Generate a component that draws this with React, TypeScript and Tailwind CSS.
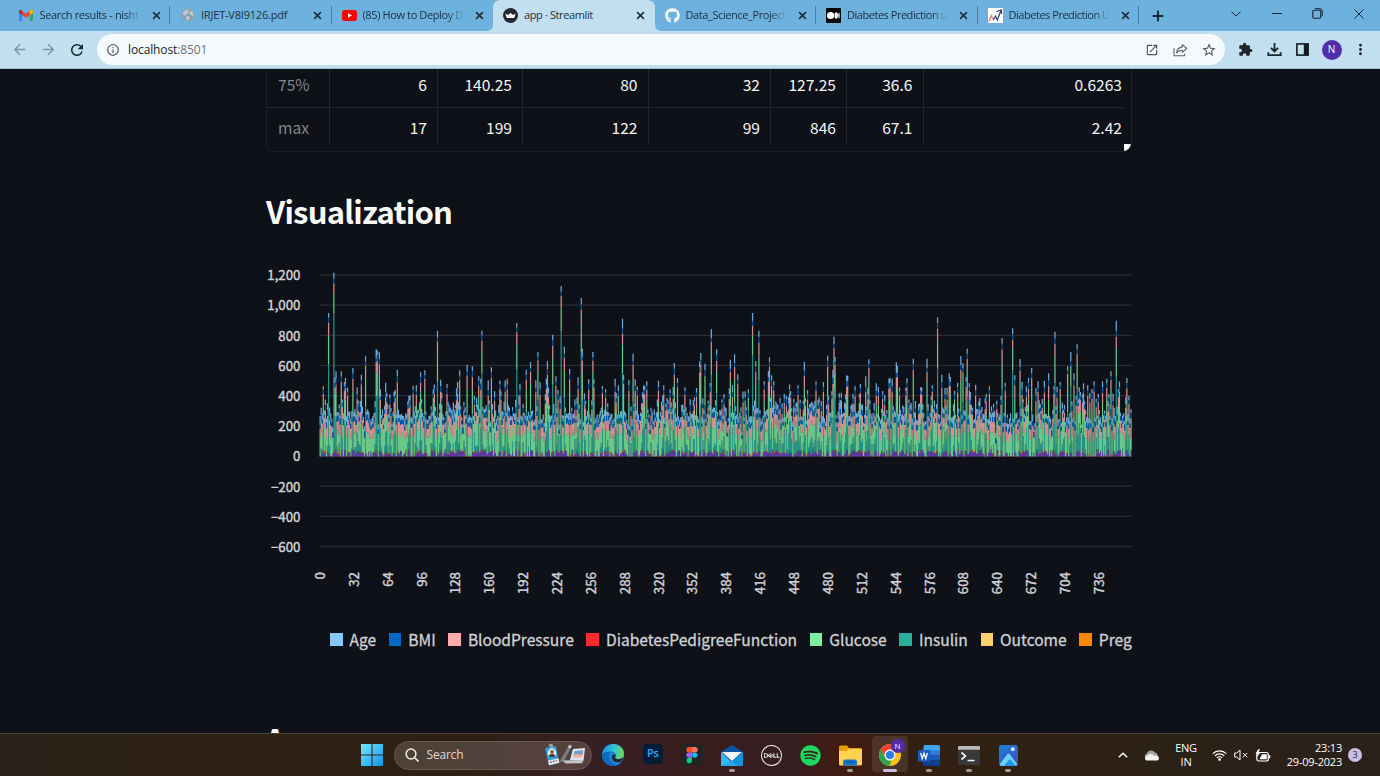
import type { ReactNode } from "react";
import { FaGithub, FaSpotify } from "react-icons/fa";
import { SiDell } from "react-icons/si";
import {
  MdArrowBack,
  MdArrowForward,
  MdExtension,
  MdMoreVert,
  MdOpenInNew,
  MdOutlineInfo,
  MdRefresh,
  MdStarBorder,
} from "react-icons/md";

/* ---------- Tab icons ---------- */

const GmailIcon = () => (
  <svg viewBox="0 0 14 11" className="h-[11px] w-[14px]">
    <path d="M0 1.5V10a1 1 0 0 0 1 1h2.2V4.6z" fill="#4285f4" />
    <path d="M14 1.5V10a1 1 0 0 1-1 1h-2.2V4.6z" fill="#34a853" />
    <path d="M0 1.6C0 .2 1.5-.4 2.6.4L7 3.8 11.4.4C12.5-.4 14 .2 14 1.6L10.8 4.9 7 7.8 3.2 4.9z" fill="#ea4335" />
    <path d="M0 1.6C0 .5 1-.2 2 .1l1.2.8v4L0 2.8z" fill="#c5221f" />
    <path d="M14 1.6C14 .5 13-.2 12 .1l-1.2.8v4L14 2.8z" fill="#fbbc04" />
  </svg>
);

const GlobeIcon = () => (
  <svg viewBox="0 0 14 14" className="size-[14px]">
    <circle cx="7" cy="7" r="6.5" fill="#8f9fa9" />
    <path d="M1.800 5C2.600 3 4.600 1.800 6.500 1.700L8 3 6.500 4.500 7 6 5 6.300 4 7.800 2.500 7zM8.500 3.500l2.500-.3 1.500 2.300-.3 3-1.700-.5L9.500 6 8 5.500zM4.800 8.500l2.700-.3 1.500 1.500-1.500 2.500-2 .1z" fill="#bccbd5" />
  </svg>
);

const YoutubeIcon = () => (
  <svg viewBox="0 0 15 11" className="h-[11px] w-[15px]">
    <rect width="15" height="11" rx="2.8" fill="#f00" />
    <path d="M6 3.200v4.600l4-2.300z" fill="#fff" />
  </svg>
);

const StreamlitIcon = () => (
  <svg viewBox="0 0 15 15" className="size-[15px]">
    <circle cx="7.500" cy="7.500" r="7.500" fill="#262730" />
    <path d="M2.300 5.600l2.700 1.300L7.500 4.900 10 6.900l2.700-1.300-1.300 4c-.1.400-.3.500-.7.500H4.300c-.4 0-.6-.1-.7-.5z" fill="#fff" />
  </svg>
);

const MediumIcon = () => (
  <svg viewBox="0 0 15 15" className="size-[15px]">
    <rect width="15" height="15" rx="1" fill="#000" />
    <circle cx="4.600" cy="7.500" r="3.600" fill="#fff" />
    <ellipse cx="10.200" cy="7.500" rx="1.700" ry="3.300" fill="#fff" />
    <ellipse cx="13" cy="7.500" rx=".7" ry="3" fill="#fff" />
  </svg>
);

const TrendIcon = () => (
  <svg viewBox="0 0 15 15" className="size-[15px]">
    <rect width="15" height="15" fill="#fff" />
    <path d="M.8 13.500L3.400 7.500l2.200 4.500" fill="none" stroke="#ef7b5c" strokeWidth="1.300" />
    <path d="M5.400 12L7.500 8l1.800 4L13 2.500M8.500 3.700L13.200 1.800l.6 4" fill="none" stroke="#1f3f78" strokeWidth="1.200" />
  </svg>
);

const CloseIcon = () => (
  <svg viewBox="0 0 9 9" className="size-[9px] shrink-0">
    <path d="M1.100 1.100l6.800 6.800M7.900 1.100L1.100 7.900" stroke="#202b33" strokeWidth="1.500" />
  </svg>
);

type Tab = { icon: ReactNode; title: string; active?: boolean; divider?: boolean; tracking: string };

const FADE = "[mask-image:linear-gradient(to_right,#000_84%,transparent_100%)]";

const tabs: Tab[] = [
  { icon: <GmailIcon />, title: "Search results - nisht", divider: true, tracking: `tracking-[-0.36px] ${FADE}` },
  { icon: <GlobeIcon />, title: "IRJET-V8I9126.pdf", divider: true, tracking: "tracking-[-0.2px]" },
  { icon: <YoutubeIcon />, title: "(85) How to Deploy D", tracking: `tracking-[-0.38px] ${FADE}` },
  { icon: <StreamlitIcon />, title: "app · Streamlit", active: true, tracking: "tracking-[-0.38px]" },
  { icon: <FaGithub className="size-[15px] text-white" />, title: "Data_Science_Project", divider: true, tracking: `tracking-[-0.4px] ${FADE}` },
  { icon: <MediumIcon />, title: "Diabetes Prediction u", divider: true, tracking: `tracking-[-0.47px] ${FADE}` },
  { icon: <TrendIcon />, title: "Diabetes Prediction U", divider: true, tracking: `tracking-[-0.47px] ${FADE}` },
];

function TabStrip() {
  return (
    <div className="flex h-[31px] shrink-0 bg-[#6db1de] pl-[8.500px] text-[#20323f]">
      {tabs.map((t) => (
        <div key={t.title} className="relative flex w-[161.500px] shrink-0 items-center pb-px pl-[9.500px] pr-[10px]">
          {t.active && (
            <svg viewBox="0 0 174 31" className="absolute -left-[6px] top-0 h-[31px] w-[174px]">
              <path d="M0 31q6 0 6-7V8q0-8 8-8h146q8 0 8 8v16q0 7 6 7z" fill="#c2dff0" />
            </svg>
          )}
          <span className="relative flex w-[16px] shrink-0 items-center justify-center">{t.icon}</span>
          <span className={`relative ml-[5.500px] min-w-[101px] whitespace-nowrap text-[11px] leading-[16px] ${t.tracking}`}>
            {t.title}
          </span>
          <span className="absolute right-[9.500px] top-[11px] flex">
            <CloseIcon />
          </span>
          {t.divider && <span className="absolute right-0 top-[6px] h-[18px] w-px bg-[#4b7b9c]" />}
        </div>
      ))}
      <div className="ml-[11px] flex w-[16px] items-center justify-center">
        <svg viewBox="0 0 12 12" className="size-[12px]">
          <path d="M6 .8v10.400M.8 6h10.400" stroke="#17242d" strokeWidth="1.900" />
        </svg>
      </div>
      <div className="ml-auto flex h-[27px] items-center text-[#16252f]">
        <span className="flex w-[41px] justify-center">
          <svg viewBox="0 0 10 6" className="h-[6px] w-[10px]">
            <path d="M.5.700L5 5.100 9.500.700" fill="none" stroke="currentColor" strokeWidth="1" />
          </svg>
        </span>
        <span className="flex w-[41px] justify-center">
          <span className="h-px w-[10px] bg-[#16252f]" />
        </span>
        <span className="flex w-[41px] justify-center">
          <svg viewBox="0 0 11 11" className="size-[11px]">
            <rect x=".8" y="2.300" width="7.900" height="7.900" rx="1.200" fill="none" stroke="currentColor" strokeWidth="1.100" />
            <path d="M2.800.7h5.200a2.300 2.300 0 0 1 2.300 2.300v5.200" fill="none" stroke="currentColor" strokeWidth="1" />
          </svg>
        </span>
        <span className="flex w-[42px] justify-center">
          <svg viewBox="0 0 10 10" className="size-[10px]">
            <path d="M.5.500l9 9M9.500.500l-9 9" stroke="currentColor" strokeWidth="1" />
          </svg>
        </span>
      </div>
    </div>
  );
}

function Toolbar() {
  return (
    <div className="flex h-[38px] shrink-0 items-center border-b border-[#9fbfcd] bg-[#c2dff0]">
      <MdArrowBack className="ml-[11px] size-[17px] text-[#7b93a3]" />
      <MdArrowForward className="ml-[12px] size-[17px] text-[#7b93a3]" />
      <MdRefresh className="ml-[11px] size-[18px] text-[#1b262d]" />
      <div className="ml-[11px] flex h-[31px] w-[1128px] items-center rounded-full bg-[#f5fafe] pl-[9px] text-[#4d565c]">
        <MdOutlineInfo className="size-[14px]" />
        <span className="ml-[8px] text-[12px] leading-[16px] tracking-[-0.12px] text-[#1d2226]">
          localhost<span className="text-[#6b7277]">:8501</span>
        </span>
        <span className="ml-auto flex items-center pr-[8px]">
          <MdOpenInNew className="size-[14px]" />
          <svg viewBox="0 0 15 14" className="ml-[14px] h-[14px] w-[15px]">
            <path d="M1 5v7.800h10.500v-2" fill="none" stroke="#5d666c" strokeWidth="1.100" />
            <path d="M9.300 1.700l4.500 3.800-4.500 3.800V7.200C6.800 7.100 5 7.900 3.500 10c.4-3.100 2.200-5.500 5.800-6.100z" fill="none" stroke="#5d666c" strokeWidth="1.100" strokeLinejoin="round" />
          </svg>
          <MdStarBorder className="ml-[13px] size-[16px]" />
        </span>
      </div>
      <MdExtension className="ml-[13px] size-[15px] text-[#1c252b]" />
      <svg viewBox="0 0 15 15" className="ml-[13.500px] size-[15px]">
        <path d="M7.500 1v8M3.900 5.800l3.600 3.600 3.600-3.600M1.300 10.200v3h12.400v-3" fill="none" stroke="#1c252b" strokeWidth="1.800" />
      </svg>
      <svg viewBox="0 0 13 13" className="ml-[14.500px] h-[13px] w-[13px]">
        <rect x=".9" y=".9" width="11.200" height="11.200" fill="none" stroke="#111a20" strokeWidth="1.600" />
        <path d="M7.800 1h4.200v11H7.800z" fill="#111a20" />
      </svg>
      <span className="ml-[12.500px] flex size-[20px] items-center justify-center rounded-full bg-[#512da8] text-[10px] text-white">
        N
      </span>
      <MdMoreVert className="ml-[10px] size-[17px] text-[#1c252b]" />
    </div>
  );
}

/* ---------- Summary table ---------- */

const rows = [
  ["75%", "6", "140.25", "80", "32", "127.25", "36.6", "0.6263"],
  ["max", "17", "199", "122", "99", "846", "67.1", "2.42"],
];

function SummaryTable() {
  return (
    <div className="relative ml-[266px] h-[83px] w-[866px] overflow-hidden rounded-b-[9px] border border-t-0 border-[#1e2126]">
      <div className="flex h-[75px] w-[857px] flex-col justify-start overflow-hidden">
        {rows.map((r, i) => (
          <div
            key={r[0]}
            className={`grid shrink-0 grid-cols-[63px_108px_85px_125.500px_122.500px_76px_76.500px_208.500px] ${
              i === 0 ? "h-[39px]" : "h-[43px]"
            }`}
          >
            {r.map((c, j) => (
              <div
                key={j}
                className={`flex justify-end pr-[10px] text-[15.600px] ${j < 7 ? "border-r border-[#24262b]" : ""} ${
                  j === 0 ? "!justify-start pl-[11px] text-[#83858a]" : "text-[#f4f5f6]"
                } ${i === 0 ? "h-[39px] border-b border-b-[#24262b] leading-[30px]" : "h-[43px] leading-[38px]"}`}
              >
                {c}
              </div>
            ))}
          </div>
        ))}
      </div>
      <span className="absolute bottom-0 right-0 size-[7px] bg-white" />
    </div>
  );
}

/* ---------- Stacked bar chart ---------- */

const BASE = 194.500;
const UNIT = 0.1511;
const LEFT = 319.500;
const STEP = 1.0573;

/* Tall records: horizontal position and top of the stack, in thirds of a pixel. */
const tall: [number, number[][]][] = [
  [260, [[204,153],[220,32],[191,373],[224,347],[229,328],[242,328],[255,347],[277,318],[290,376],[303,338],[316,283],[348,262],[351,265],[357,270],[362,382],[379,392],[411,323],[404,384],[449,400],[468,370],[480,331],[493,325],[518,382],[531,206],[541,353],[560,366],[592,360],[598,325],[620,308],[637,313],[656,343],[661,350],[665,206],[684,355],[694,316],[703,388],[722,388],[735,355],[741,350],[770,183],[779,365],[798,323],[811,301],[827,355],[833,270],[859,350],[862,298],[878,218],[887,343]]],
  [560, [[2,72],[12,254],[28,321],[54,346],[64,108],[67,260],[86,352],[98,270],[103,352],[165,350],[174,370],[187,170],[191,338],[206,353],[218,275],[224,352],[250,370],[254,372],[260,358],[295,356],[312,370],[343,303],[353,348],[375,376],[409,378],[418,298],[421,273],[434,305],[452,363],[455,201],[470,262],[492,397],[511,293],[517,370],[524,277],[533,337],[555,388],[565,382],[577,153],[587,298],[597,206],[612,358],[626,328],[629,286],[636,340],[640,358],[678,402],[692,388],[714,370],[733,300],[768,358],[791,360],[803,281],[819,324],[822,224],[826,285],[845,392],[861,340],[864,342],[886,374]]],
  [850, [[16,373],[31,366],[47,343],[57,292],[85,375],[117,350],[121,347],[125,350],[139,301],[143,312],[148,376],[171,349],[190,290],[211,376],[215,376],[231,290],[248,370],[263,166],[276,338],[286,378],[296,334],[299,345],[323,362],[333,282],[340,304],[349,345],[352,260],[358,363],[378,368],[419,373],[457,228],[464,362],[489,199],[495,340],[511,291],[515,360],[530,373],[536,347],[546,318],[565,358],[584,357],[597,334],[610,373],[616,209],[620,374],[631,360],[654,313],[663,270],[673,334],[680,247],[689,376],[699,364],[714,370],[733,358],[745,396],[758,358],[771,350],[784,328],[800,176],[806,382],[831,348],[837,402]]],
];

const tops = new Map<number, number>();
for (const [origin, points] of tall) {
  for (const [px, py] of points) {
    const i = Math.round((origin + px / 3 - LEFT) / STEP - 0.5);
    tops.set(i, (BASE - py / 3) / UNIT);
  }
}

let seed = 90217;
const rnd = () => {
  seed = (seed * 1664525 + 1013904223) >>> 0;
  return seed / 4294967296;
};

/* Layers from the bottom of the stack to the top. */
const layerColors = ["#6d3fc0", "#ff8700", "#ffd16a", "#29b09d", "#7defa1", "#ffabab", "#0068c9", "#83c9ff"];
const layers = layerColors.map(() => "");

for (let i = 0; i < 768; i++) {
  const peak = tops.get(i);
  const skin = rnd() < 0.28 && !peak ? 0 : 12 + rnd() * 32;
  const preg = rnd() * rnd() * 14;
  const outcome = rnd() < 0.35 ? 1 : 0;
  let age = 21 + rnd() * rnd() * 45;
  const bmi = 21 + rnd() * 20;
  let bp = rnd() < 0.05 ? 0 : 54 + rnd() * 32;
  let glucose = 76 + (rnd() + rnd()) * 46;
  let insulin = skin === 0 || rnd() < 0.38 ? 0 : 30 + rnd() * rnd() * 190;
  if (peak) {
    if (peak > 500) {
      glucose = Math.min(197, glucose + 45);
      age += 8;
      bp += 5;
    }
    const rest = skin + preg + outcome + age + bmi + bp + glucose;
    insulin = peak - rest;
    if (insulin < 0) {
      glucose += insulin;
      insulin = 0;
    }
  }
  const x = (i * STEP).toFixed(2);
  let y = BASE;
  [skin, preg, outcome, insulin, glucose, bp, bmi, age].forEach((v, k) => {
    const h = v * UNIT;
    if (h > 0) {
      layers[k] += `M${x} ${y.toFixed(2)}h1.250v${(-h).toFixed(2)}h-1.250z`;
      y -= h;
    }
  });
}

const yTicks = ["1,200", "1,000", "800", "600", "400", "200", "0", "−200", "−400", "−600"];
const xTicks = Array.from({ length: 24 }, (_, i) => i * 32);

const legend: [string, string][] = [
  ["Age", "bg-[#83c9ff]"],
  ["BMI", "bg-[#0068c9]"],
  ["BloodPressure", "bg-[#ffabab]"],
  ["DiabetesPedigreeFunction", "bg-[#ff2b2b]"],
  ["Glucose", "bg-[#7defa1]"],
  ["Insulin", "bg-[#29b09d]"],
  ["Outcome", "bg-[#ffd16a]"],
  ["Preg", "bg-[#ff8700]"],
];

function BarChart() {
  return (
    <svg viewBox="260 0 880 345" className="ml-[260px] block h-[345px] w-[880px]">
      {yTicks.map((t, i) => (
        <g key={t}>
          <path d={`M320 ${(12.900 + i * 30.180).toFixed(1)}H1132`} stroke="#2a2b34" strokeWidth="1.300" />
          <text
            x="300.500"
            y={18.300 + i * 30.180}
            textAnchor="end"
            fontSize="13.300"
            fill="#d0d1d6"
            stroke="#d0d1d6"
            strokeWidth=".4"
          >
            {t}
          </text>
        </g>
      ))}
      <g transform={`translate(${LEFT} 0)`} opacity="0.820">
        {layers.map((d, i) => (
          <path key={i} d={d} fill={layerColors[i]} />
        ))}
      </g>
      {xTicks.map((t) => (
        <text
          key={t}
          transform={`translate(${(325 + t * 1.0582).toFixed(2)} 310) rotate(-90)`}
          textAnchor="end"
          fontSize="13.300"
          fill="#d0d1d6"
          stroke="#d0d1d6"
          strokeWidth=".4"
        >
          {t}
        </text>
      ))}
    </svg>
  );
}

function Legend() {
  return (
    <div className="ml-[330px] mt-[20px] flex h-[24px] w-[806px] items-center gap-[12.700px] text-[15.550px] leading-[24px] text-[#d0d1d5] [-webkit-text-stroke:0.3px_#d0d1d5]">
      {legend.map(([name, color]) => (
        <span key={name} className="flex shrink-0 items-center gap-[7px]">
          <span className={`mt-px size-[12.500px] ${color}`} />
          {name}
        </span>
      ))}
    </div>
  );
}

/* ---------- Taskbar ---------- */

const WindowsIcon = () => (
  <svg viewBox="0 0 22 22" className="size-[22px]">
    <defs>
      <linearGradient id="win" x1="0" y1="0" x2="1" y2="1">
        <stop offset="0" stopColor="#7be4ff" />
        <stop offset="1" stopColor="#0a96ee" />
      </linearGradient>
    </defs>
    <path d="M0 0h10.500v10.500H0zM11.500 0H22v10.500H11.500zM0 11.500h10.500V22H0zM11.500 11.500H22V22H11.500z" fill="url(#win)" />
  </svg>
);

const SearchArt = () => (
  <svg viewBox="0 0 42 24" className="h-[24px] w-[42px]">
    <path d="M15.500 18.500L25 2.500l2.500 1-8 15.500z" fill="#777f82" />
    <path d="M25 2l2.700.5-1 3-3-1z" fill="#c5cacc" />
    <path d="M1 5l11-2 3 17-10 2.500z" fill="#2e9fd8" />
    <path d="M4.500 1.500l4-1 1 5-3 .5z" fill="#8ca2aa" />
    <circle cx="8" cy="10" r="4.400" fill="#e4eef2" />
    <circle cx="8" cy="8.800" r="1.900" fill="#875637" />
    <path d="M4.800 13c.8-3 5.700-3 6.400 0-1.800 2-4.800 1.800-6.400 0z" fill="#4b3e39" />
    <path d="M4 17.500l10.500-2.300 1 4.500-10.500 2.500z" fill="#e5e5e5" />
    <path d="M6 19.300l7-1.600" stroke="#6c7174" strokeWidth="1.200" strokeDasharray="2 1" />
    <path d="M29 6l12-1-1.500 12.500L26 17z" fill="#d9e7f2" />
    <path d="M30.500 8l8.700-.7-.5 5-9.200.7z" fill="#7099ce" />
    <path d="M29.500 12c3-2 6 .5 9.200-1.500l-.5 4-9.200.2z" fill="#efb59b" />
    <path d="M19 17.500l20.500-.5-1.500 3.200-16.500.3z" fill="#c2c6ca" />
  </svg>
);

const EdgeIcon = () => (
  <svg viewBox="0 0 22 22" className="size-[22px]">
    <defs>
      <linearGradient id="edgeTop" x1="0" y1=".3" x2="1" y2=".4">
        <stop offset="0" stopColor="#168fdc" />
        <stop offset=".55" stopColor="#36c3d8" />
        <stop offset="1" stopColor="#64db4d" />
      </linearGradient>
    </defs>
    <circle cx="11" cy="11" r="11" fill="#1785dc" />
    <path d="M.3 9.500C1.500 3.600 6 0 11.300 0 17.500 0 22 4.300 22 9.400c0 3.600-2.600 5.800-5.700 5.800-2 0-3.500-.8-3.500-1.600 0-.6.900-.9.900-2.300 0-2.400-2.300-4.100-5.200-4.100C5 7.200 1.700 8 .3 9.500z" fill="url(#edgeTop)" />
    <path d="M8.300 8.200C5.800 10.500 6.400 15 9 18c1.600 1.900 4 2.900 6.200 3.100C10 23.300 1 21.300.1 12.500-.2 9 5 7.200 8.300 8.200z" fill="#1166bb" />
    <path d="M12.800 13.600c0 .8 1.500 1.600 3.500 1.600 1.900 0 3.900-.9 4.800-1.600.5 0-.6 2.300-2.300 3.800-4.100 2.500-9.600-.8-8.600-5 .3-1.200 1.500-2.300 2.800-2.100 1 .8.900 2 .3 2.500z" fill="#2d2023" />
  </svg>
);

const FigmaIcon = () => (
  <svg viewBox="0 0 22 22" className="size-[22px]">
    <rect width="22" height="22" rx="2" fill="#242424" />
    <path d="M11 3H8a2.700 2.700 0 0 0 0 5.400h3z" fill="#f24e1e" />
    <path d="M11 3h3a2.700 2.700 0 0 1 0 5.400h-3z" fill="#ff7262" />
    <path d="M11 8.400H8a2.700 2.700 0 0 0 0 5.400h3z" fill="#a259ff" />
    <circle cx="13.800" cy="11.100" r="2.700" fill="#1abcfe" />
    <path d="M11 13.800H8a2.700 2.700 0 1 0 3 2.700z" fill="#0acf83" />
  </svg>
);

const MailIcon = () => (
  <svg viewBox="0 0 22 21" className="h-[21px] w-[22px]">
    <path d="M11 0l11 7v13a1 1 0 0 1-1 1H1a1 1 0 0 1-1-1V7z" fill="#0b56a4" />
    <path d="M1 7h20L11 16z" fill="#f3f7fa" />
    <path d="M0 7l14 13.500L0 21z" fill="#35b9f1" />
    <path d="M22 7L11 16.500 16 21h5a1 1 0 0 0 1-1z" fill="#1493df" />
    <path d="M0 20.500L11 16l5 5H1z" fill="#28a9ea" />
  </svg>
);

const FolderIcon = () => (
  <svg viewBox="0 0 23 21" className="h-[21px] w-[23px]">
    <path d="M0 2a1.500 1.500 0 0 1 1.500-1.500H8L10 3h11.500A1.500 1.500 0 0 1 23 4.500V8H0z" fill="#e6a100" />
    <path d="M0 6h7.500L9.500 4H22a1 1 0 0 1 1 1v14a1.500 1.500 0 0 1-1.500 1.500h-20A1.500 1.500 0 0 1 0 19z" fill="#ffd250" />
    <path d="M4 20.500V17a2.500 2.500 0 0 1 2.500-2.500h9A2.500 2.500 0 0 1 18 17v3.500z" fill="#1178cc" />
    <path d="M7 17h8" stroke="#0d5599" strokeWidth="1.300" />
  </svg>
);

const ChromeIcon = () => (
  <svg viewBox="0 0 22 22" className="size-[22px]">
    <circle cx="11" cy="11" r="11" fill="#fbc116" />
    <path d="M1.500 5.500A11 11 0 0 1 20.500 5.500H11a5.500 5.500 0 0 0-4.800 8.200z" fill="#ea4335" />
    <path d="M1.500 5.500l4.700 8.200a5.500 5.500 0 0 0 6.300 2.600L10.500 22A11 11 0 0 1 1.500 5.500z" fill="#2da44e" />
    <circle cx="11" cy="11" r="5.500" fill="#fff" />
    <circle cx="11" cy="11" r="4.300" fill="#2f7de9" />
  </svg>
);

const WordIcon = () => (
  <svg viewBox="0 0 22 21" className="h-[21px] w-[22px]">
    <path d="M6 0h14.500A1.500 1.500 0 0 1 22 1.500V6H5z" fill="#41a5ee" />
    <path d="M5 5.500h17v5H5z" fill="#2b7cd3" />
    <path d="M5 10.500h17v5H5z" fill="#185abd" />
    <path d="M5 15.500h17v4a1.500 1.500 0 0 1-1.500 1.500h-14A1.500 1.500 0 0 1 5 19.500z" fill="#103f91" />
    <rect y="5" width="12" height="11.500" rx="1" fill="#185abd" />
    <path d="M2.600 7.800l1.600 6 1.800-5.600 1.800 5.600 1.600-6" fill="none" stroke="#fff" strokeWidth="1.300" />
  </svg>
);

const TerminalIcon = () => (
  <svg viewBox="0 0 22 19" className="h-[19px] w-[22px]">
    <rect width="22" height="19" rx="1.200" fill="#37393a" />
    <path d="M0 3.700V1.200A1.200 1.200 0 0 1 1.200 0h19.600A1.200 1.200 0 0 1 22 1.200v2.500z" fill="#b9bab9" />
    <path d="M3.500 6.500L7.500 10l-4 3.500M9.500 14.500h7" fill="none" stroke="#f2f2f2" strokeWidth="1.700" />
  </svg>
);

const PhotosIcon = () => (
  <svg viewBox="0 0 19 21" className="h-[21px] w-[19px]">
    <defs>
      <linearGradient id="photo" x1="0" y1="0" x2="1" y2="1">
        <stop offset="0" stopColor="#1683da" />
        <stop offset="1" stopColor="#5044bf" />
      </linearGradient>
    </defs>
    <rect width="19" height="21" rx="2.500" fill="url(#photo)" />
    <path d="M1 19L8.500 9a1.300 1.300 0 0 1 2 0L18 19c.2.700-.6 2-1.500 2h-14C1.500 21 .5 20 1 19z" fill="#6dd3fb" />
    <path d="M5 21l5-6.300a1.300 1.300 0 0 1 1.800 0L17 21z" fill="#2296e8" />
    <circle cx="13.800" cy="4.200" r="1.900" fill="#e3f2ff" />
  </svg>
);

const PhotoshopIcon = () => (
  <span className="flex size-[20px] items-center justify-center rounded-[4px] bg-[#001e36] pb-px text-[11px] font-semibold tracking-[-0.3px] text-[#31a8ff]">
    Ps
  </span>
);

type App = { key: string; icon: ReactNode; running?: boolean; focused?: boolean };

const apps: App[] = [
  { key: "edge", icon: <EdgeIcon /> },
  { key: "ps", icon: <span className="pb-[3px]"><PhotoshopIcon /></span> },
  { key: "figma", icon: <FigmaIcon /> },
  { key: "mail", icon: <span className="pt-[1px]"><MailIcon /></span>, running: true },
  { key: "dell", icon: <SiDell className="size-[21px] text-[#eceaea]" /> },
  { key: "spotify", icon: <FaSpotify className="size-[21px] text-[#1ed760]" /> },
  { key: "files", icon: <span className="pt-[1px]"><FolderIcon /></span>, running: true },
  { key: "chrome", icon: <ChromeIcon />, running: true, focused: true },
  { key: "word", icon: <WordIcon />, running: true },
  { key: "terminal", icon: <TerminalIcon />, running: true },
  { key: "photos", icon: <PhotosIcon />, running: true },
];

function Taskbar() {
  return (
    <div className="flex h-[43px] shrink-0 items-center border-t border-[#4d4136] bg-[linear-gradient(90deg,#2c2118_0%,#2e2114_34%,#352023_42%,#3a1d1e_52%,#341e20_57%,#421b12_61%,#331f12_66%,#2e2113_75%,#2a211b_100%)] text-white">
      <span className="ml-[360.500px] flex">
        <WindowsIcon />
      </span>
      <div className="ml-[11px] flex h-[29px] w-[198px] items-center rounded-full border border-[#69594f] bg-[linear-gradient(90deg,#4d4135,#56403f)] pl-[10px] pr-[5px]">
        <svg viewBox="0 0 14 14" className="size-[14px]">
          <circle cx="6" cy="6" r="4.900" fill="none" stroke="#f0eeec" strokeWidth="1.500" />
          <path d="M9.700 9.700l3.800 3.800" stroke="#f0eeec" strokeWidth="1.600" />
        </svg>
        <span className="ml-[8px] text-[12px] tracking-[-0.2px] text-[#dfdcd9]">Search</span>
        <span className="ml-auto flex">
          <SearchArt />
        </span>
      </div>
      <div className="ml-[2px] flex h-full">
        {apps.map((a) => (
          <div key={a.key} className="relative flex w-[39.500px] items-center justify-center">
            {a.focused && <span className="absolute inset-x-[2px] bottom-[4px] top-[2px] rounded-[4px] bg-white/10" />}
            <span className="relative flex">{a.icon}</span>
            {a.running && (
              <span
                className={`absolute bottom-[4px] h-[3px] rounded-full ${
                  a.focused ? "w-[14px] bg-[#c9bfe6]" : "w-[6px] bg-[#a39c98]"
                }`}
              />
            )}
            {a.focused && (
              <span className="absolute right-[5px] top-[5px] flex size-[14px] items-center justify-center rounded-full bg-[#512da8] text-[8px]">
                N
              </span>
            )}
          </div>
        ))}
      </div>
      <div className="ml-auto flex items-center pr-[18px]">
        <svg viewBox="0 0 10 6" className="h-[6px] w-[10px]">
          <path d="M.8 5.200L5 1.200l4.200 4" fill="none" stroke="#fff" strokeWidth="1.400" />
        </svg>
        <svg viewBox="0 0 15 11" className="ml-[16px] h-[11px] w-[15px]">
          <path d="M3.800 10A3.500 3.500 0 0 1 3 3.300 4.500 4.500 0 0 1 11 2.500 4 4 0 0 1 11.500 10z" fill="#aaa6a3" />
          <path d="M3.500 10.500a2.500 2.500 0 0 1 .2-5C5 3.500 8.500 3.500 9.600 5.800c3-.8 5.400 0 5.400 2.400 0 1.500-1.300 2.300-2.500 2.300z" fill="#f3f2f1" />
        </svg>
        <div className="ml-[15px] flex w-[24px] flex-col items-center text-[11px] leading-[14px] tracking-[-0.3px]">
          <span>ENG</span>
          <span>IN</span>
        </div>
        <svg viewBox="0 0 15 12" className="ml-[14px] h-[12px] w-[15px]">
          <path d="M.7 4.600a9.600 9.600 0 0 1 13.600 0M2.800 6.800a6.600 6.600 0 0 1 9.400 0M4.800 8.900a3.800 3.800 0 0 1 5.400 0" fill="none" stroke="#fff" strokeWidth="1.200" />
          <circle cx="7.500" cy="10.600" r="1.300" fill="#fff" />
        </svg>
        <svg viewBox="0 0 14 12" className="ml-[7px] h-[12px] w-[14px]">
          <path d="M.7 4h2l3.300-3v10l-3.300-3h-2z" fill="none" stroke="#fff" strokeWidth="1" strokeLinejoin="round" />
          <path d="M9 4l4.300 4.300M13.300 4L9 8.300" stroke="#fff" strokeWidth="1" />
        </svg>
        <svg viewBox="0 0 16 13" className="ml-[7px] h-[13px] w-[16px]">
          <rect x="1.800" y="3.500" width="11.500" height="8.500" rx="2" fill="none" stroke="#fff" strokeWidth="1.200" />
          <path d="M7 5.300h4.800v4.900H4.500z" fill="#fff" />
          <path d="M14.500 6.200v3" stroke="#fff" strokeWidth="1.500" />
          <path d="M3.500 0L.5 4.600h2L1.800 8l3.700-4.600H3.300L5 .5z" fill="#fff" />
        </svg>
        <div className="ml-[14px] flex w-[57px] flex-col items-end whitespace-nowrap text-[11px] leading-[14px] tracking-[-0.22px]">
          <span>23:13</span>
          <span>29-09-2023</span>
        </div>
        <span className="ml-[6px] flex size-[14px] items-center justify-center rounded-full bg-[#c9bfe6] text-[9px] text-[#2b2637]">
          3
        </span>
      </div>
    </div>
  );
}

export default function App() {
  return (
    <div className="flex h-[776px] w-[1380px] flex-col overflow-hidden bg-[#0e1117] font-['Open_Sans','Noto_Sans',sans-serif]">
      <TabStrip />
      <Toolbar />
      <main className="flex min-h-0 flex-1 flex-col overflow-hidden font-['Noto_Sans_CJK_SC','Source_Sans_Pro',sans-serif] [&>*]:shrink-0">
        <SummaryTable />
        <h2 className="ml-[266px] mt-[37px] h-[44px] text-[31px] font-bold leading-[44px] tracking-[-0.75px] text-[#fafafa]">
          Visualization
        </h2>
        <div className="mt-[29px]">
          <BarChart />
        </div>
        <Legend />
        <h2 className="ml-[265px] mt-[66px] text-[31px] font-bold leading-[44px] tracking-[-0.75px] text-[#fafafa]">A</h2>
      </main>
      <Taskbar />
    </div>
  );
}
